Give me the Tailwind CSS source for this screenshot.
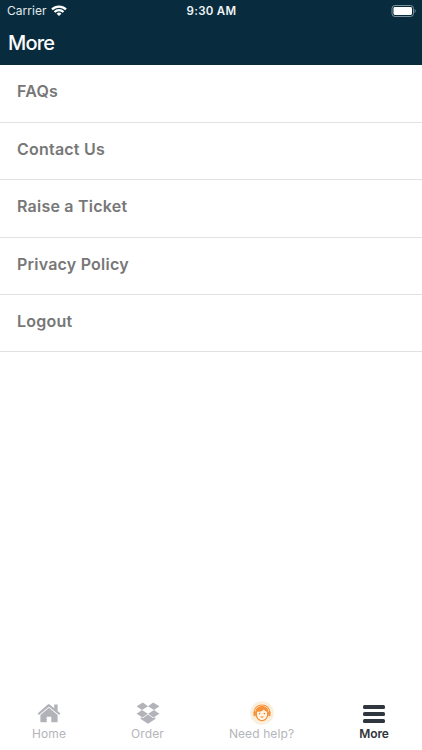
<!DOCTYPE html>
<html lang="en">
<head>
<meta charset="utf-8">
<meta name="viewport" content="width=device-width, initial-scale=1">
<title>More</title>
<script src="https://cdn.jsdelivr.net/npm/@tailwindcss/browser@4"></script>
</head>
<body class="bg-white">
<div class="flex h-[750px] w-[422px] flex-col overflow-hidden bg-white font-['Inter',sans-serif]">
  <header class="h-[65px] shrink-0 bg-[#082c3e] text-white">
    <div class="grid h-[22px] grid-cols-3 items-center pr-[6px] pl-[7px]">
      <div class="flex items-center gap-[4px]">
        <span class="text-[12px] leading-[22px] tracking-[0.05px] text-[#e3e9ec]">Carrier</span>
        <svg class="-mt-[2px] h-[11px] w-[16px]" viewBox="0 0 16 11" fill="none" stroke="#fff" stroke-width="2.2">
          <path d="M1 4.4a10 10 0 0 1 14 0M3.5 7a6.4 6.4 0 0 1 9 0"/>
          <path d="M8 11 5.6 8.7a3.4 3.4 0 0 1 4.8 0z" fill="#fff" stroke="none"/>
        </svg>
      </div>
      <span class="text-center text-[11.5px] leading-[22px] font-semibold tracking-[0.3px] whitespace-nowrap text-[#eef2f4]">9:30 AM</span>
      <svg class="-mt-[1px] h-[12px] w-[25px] justify-self-end" viewBox="0 0 25 12">
        <rect x="1" y=".5" width="21.5" height="11" rx="3" fill="none" stroke="#7d919b"/>
        <rect x="2.5" y="2" width="18.5" height="8" rx="1.4" fill="#fff"/>
        <path d="M23.6 4v4c1.4-.7 1.4-3.3 0-4z" fill="#7d919b"/>
      </svg>
    </div>
    <h1 class="pl-[8px] text-[20px] leading-[42px] font-medium tracking-[-0.8px]">More</h1>
  </header>
  <main class="flex-1 text-[16px] leading-[20px] font-semibold tracking-[0.22px] text-[#777]">
    <div class="h-[58px] border-b border-[#e2e2e2] pt-[16px] pl-[17px]">FAQs</div>
    <div class="h-[57px] border-b border-[#e2e2e2] pt-[16px] pl-[17px]">Contact Us</div>
    <div class="h-[58px] border-b border-[#e2e2e2] pt-[16px] pl-[17px]">Raise a Ticket</div>
    <div class="h-[57px] border-b border-[#e2e2e2] pt-[16px] pl-[17px]">Privacy Policy</div>
    <div class="h-[57px] border-b border-[#e2e2e2] pt-[16px] pl-[17px]">Logout</div>
  </main>
  <nav class="flex h-[50px] shrink-0 justify-between pr-[33px] pl-[32px] text-[12px] leading-[16px] tracking-[0.1px] text-[#b4b5ba]">
    <div class="flex w-[34px] flex-col items-center whitespace-nowrap">
      <div class="flex h-[26px] items-center">
        <svg class="h-[20px] w-[24px]" viewBox="0 0 24 20" fill="#b1b3b8">
          <path d="M12 .9 17.2 5.2V1.6h3.4v6.5l2.8 2.4-1.3 1.6L12 3.7 1.9 12.1.6 10.5 10.8 1.4Q12 .4 13.2 1.4z"/>
          <path d="M12 4.7 20.6 12v6.4q0 .9-.9.9H14.3v-5.6H9.7v5.6H4.3q-.9 0-.9-.9V12z"/>
        </svg>
      </div>
      <span>Home</span>
    </div>
    <div class="flex w-[33px] flex-col items-center whitespace-nowrap">
      <div class="flex h-[26px] items-center">
        <svg class="h-[22px] w-[24px]" viewBox="0 0 24 22" fill="#b1b3b8">
          <path d="M6.8.6 12 4.2 6 7.9.6 4.2zM17.2.6 23.4 4.2 18 7.9 12 4.2zM6 8.1 11.8 11.8l-5.2 3.6L.6 11.8zM18 8.1l5.4 3.7-6 3.6-5.2-3.6zM12 12.5l5.3 3.8 2-1.2v2L12 21.7l-7.3-4.6v-2l2 1.2z"/>
        </svg>
      </div>
      <span>Order</span>
    </div>
    <div class="flex w-[65px] flex-col items-center whitespace-nowrap">
      <div class="flex h-[26px] items-center">
        <svg class="h-[24px] w-[24px]" viewBox="0 0 24 24">
          <circle cx="12" cy="12" r="11.8" fill="#f9efdc"/>
          <path d="M4.3 12.5C3 1.2 21 1.2 19.7 12.5" fill="none" stroke="#f7953f" stroke-width="1.1"/>
          <path d="M5.5 13C3.9 2.2 20.1 2.2 18.5 13c-.3 4.2-3.2 7.2-6.5 7.2S5.8 17.2 5.5 13z" fill="#f7913a"/>
          <path d="M7 10.8c3.3.1 5.6-.9 7-2.3.6 1.2 1.6 2 3 2.3v2.7c0 3.1-2.2 5.5-5 5.5s-5-2.4-5-5.5z" fill="#fff4e4"/>
          <rect x="3.5" y="10.3" width="2.3" height="5" rx="1.1" fill="#f7913a"/>
          <rect x="18.2" y="10.3" width="2.3" height="5" rx="1.1" fill="#f7913a"/>
          <circle cx="9.6" cy="12.6" r=".8" fill="#ee8430"/><circle cx="14.4" cy="12.6" r=".8" fill="#ee8430"/>
          <path d="M10.2 15.6h3.6c-.4 1.5-3.2 1.5-3.6 0z" fill="#ee8430"/>
        </svg>
      </div>
      <span>Need help?</span>
    </div>
    <div class="flex w-[30px] flex-col items-center whitespace-nowrap text-[#30343b]">
      <div class="flex h-[26px] flex-col items-center justify-center gap-[3px] pt-px">
        <i class="h-[4px] w-[22px] rounded-[1.5px] bg-[#30363d]"></i>
        <i class="h-[4px] w-[22px] rounded-[1.5px] bg-[#30363d]"></i>
        <i class="h-[4px] w-[22px] rounded-[1.5px] bg-[#30363d]"></i>
      </div>
      <span class="font-semibold tracking-[-0.1px]">More</span>
    </div>
  </nav>
</div>
</body>
</html>
